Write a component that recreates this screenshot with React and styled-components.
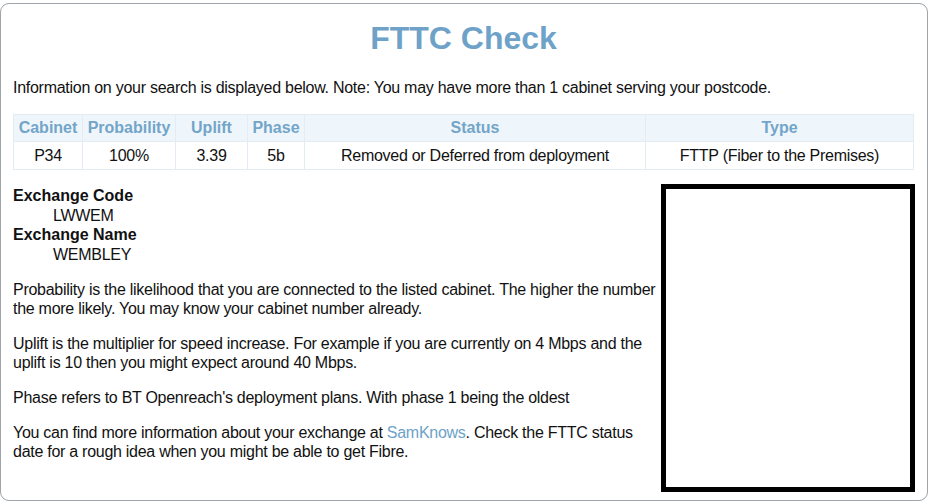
import React from "react";
import styled, { createGlobalStyle } from "styled-components";

const Global = createGlobalStyle`
  html, body { margin: 0; padding: 0; background: #fff; }
  body { font-family: "Liberation Sans", Arial, sans-serif; color: #111; }
`;

const Card = styled.div`
  box-sizing: border-box;
  width: 928px;
  height: 498px;
  margin-top: 3px;
  border: 1px solid #9ea4aa;
  border-radius: 9px;
  padding: 0 13px 0 12px;
  background: #fff;
  overflow: hidden;
`;

const Title = styled.h1`
  margin: 16px 0 0;
  font-size: 32px;
  line-height: 37px;
  font-weight: bold;
  text-align: center;
  color: #6ea2c8;
`;

const Intro = styled.p`
  margin: 21px 0 0;
  font-size: 16px;
  line-height: 19px;
  letter-spacing: -0.27px;
`;

const Table = styled.table`
  margin-top: 17px;
  width: 900px;
  border-collapse: collapse;
  table-layout: fixed;
  font-size: 16px;
`;

const Col = styled.col`
  width: ${(p) => p.$w}px;
`;

const Th = styled.th`
  height: 26px;
  padding: 0;
  border: 1px solid #e4ecf3;
  background: #eff6fb;
  color: #73a5c9;
  font-weight: bold;
  text-align: center;
  white-space: nowrap;
`;

const Td = styled.td`
  height: 27px;
  padding: 0;
  border: 1px solid #e4ecf3;
  text-align: center;
  color: #111;
  letter-spacing: -0.27px;
  white-space: nowrap;
`;

const Lower = styled.div`
  display: flex;
  justify-content: space-between;
  align-items: flex-start;
  margin-top: 14px;
`;

const TextColumn = styled.div`
  width: 648px;
  padding-top: 2px;
  font-size: 16px;
`;

const Details = styled.dl`
  margin: 0 0 16px;
  line-height: 19.5px;
`;

const Term = styled.dt`
  font-weight: bold;
`;

const Value = styled.dd`
  margin: 0 0 0 40px;
  letter-spacing: -0.27px;
`;

const Para = styled.p`
  margin: 0 0 16px;
  line-height: 19px;
  letter-spacing: -0.27px;
`;

const Link = styled.a`
  color: #6ea2c8;
  text-decoration: none;
`;

const Frame = styled.div`
  box-sizing: border-box;
  width: 254px;
  height: 308px;
  margin-right: -1px;
  border: 5px solid #000;
  background: #fff;
`;

const columns = [
  ["Cabinet", 69],
  ["Probability", 93],
  ["Uplift", 72],
  ["Phase", 57],
  ["Status", 341],
  ["Type", 268],
];

const row = ["P34", "100%", "3.39", "5b", "Removed or Deferred from deployment", "FTTP (Fiber to the Premises)"];

export default function App() {
  return (
    <>
      <Global />
      <Card>
        <Title>FTTC Check</Title>
        <Intro>
          Information on your search is displayed below. Note: You may have more than 1 cabinet serving your postcode.
        </Intro>
        <Table>
          <colgroup>
            {columns.map(([label, w]) => (
              <Col key={label} $w={w} />
            ))}
          </colgroup>
          <thead>
            <tr>
              {columns.map(([label]) => (
                <Th key={label}>{label}</Th>
              ))}
            </tr>
          </thead>
          <tbody>
            <tr>
              {row.map((v, i) => (
                <Td key={i}>{v}</Td>
              ))}
            </tr>
          </tbody>
        </Table>
        <Lower>
          <TextColumn>
            <Details>
              <Term>Exchange Code</Term>
              <Value>LWWEM</Value>
              <Term>Exchange Name</Term>
              <Value>WEMBLEY</Value>
            </Details>
            <Para>
              Probability is the likelihood that you are connected to the listed cabinet. The higher the number the more likely. You may know your cabinet number already.
            </Para>
            <Para>
              Uplift is the multiplier for speed increase. For example if you are currently on 4 Mbps and the uplift is 10 then you might expect around 40 Mbps.
            </Para>
            <Para>Phase refers to BT Openreach's deployment plans. With phase 1 being the oldest</Para>
            <Para>
              You can find more information about your exchange at <Link href="#">SamKnows</Link>. Check the FTTC status date for a rough idea when you might be able to get Fibre.
            </Para>
          </TextColumn>
          <Frame />
        </Lower>
      </Card>
    </>
  );
}
